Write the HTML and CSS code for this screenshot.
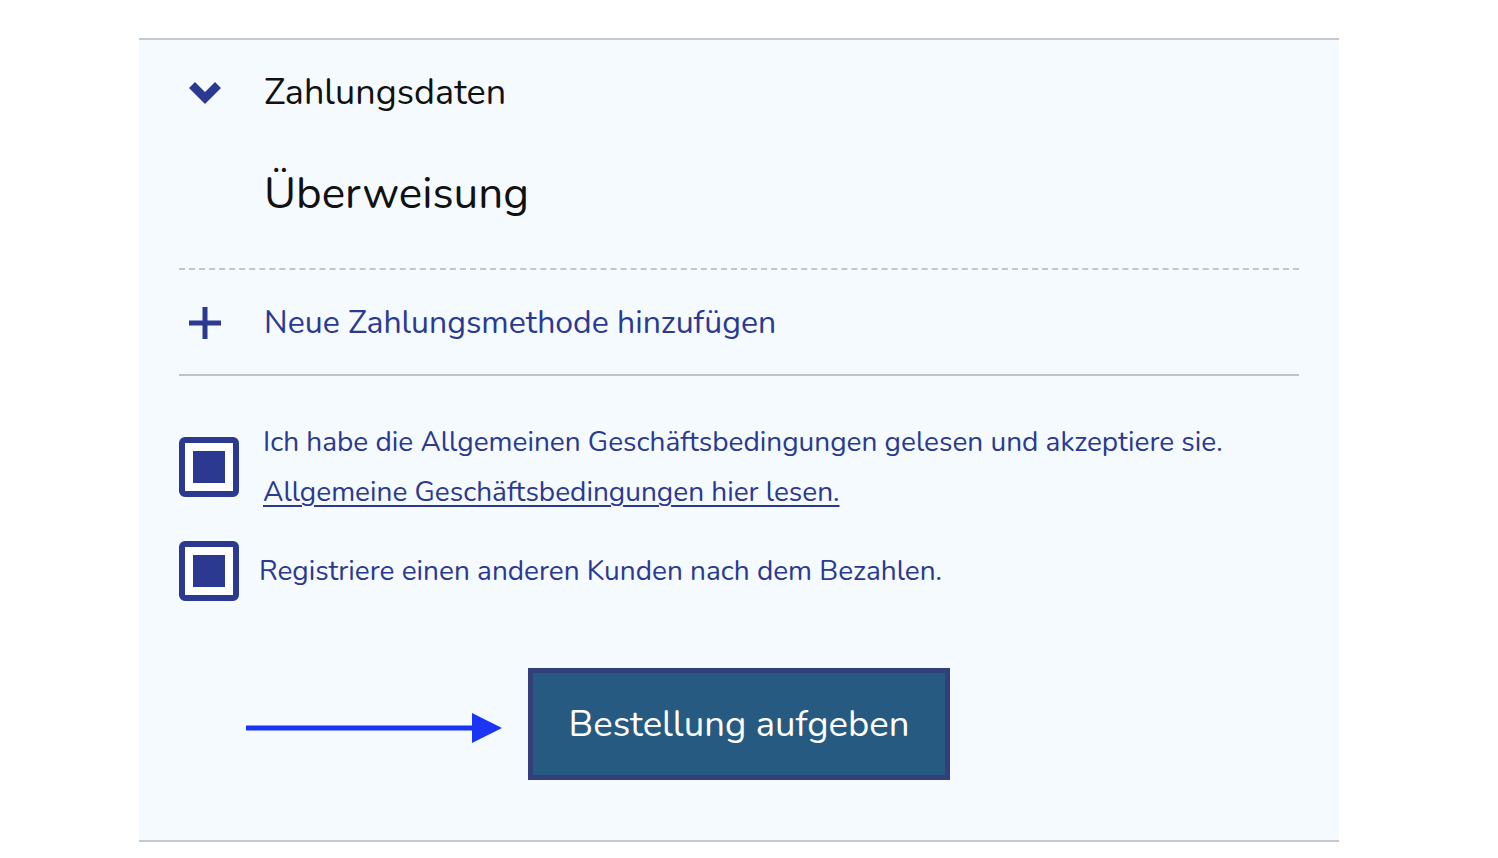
FILE: index.html
```html
<!DOCTYPE html>
<html lang="de">
<head>
<meta charset="utf-8">
<link rel="stylesheet" href="styles.css">
</head>
<body>
<section class="panel">
  <div class="header">
    <span class="chev"><svg width="32" height="22" viewBox="0 0 32 22"><path d="M0 6 L6 0 L16 10 L26 0 L32 6 L16 22 Z" fill="#2b3990"/></svg></span>
    <span class="title">Zahlungsdaten</span>
  </div>
  <div class="method">Überweisung</div>
  <div class="add">
    <span class="plus"><svg width="32" height="32" viewBox="0 0 32 32"><rect x="13.5" y="0" width="5" height="32" fill="#2b3990"/><rect x="0" y="13.5" width="32" height="5" fill="#2b3990"/></svg></span>
    <span class="add-text">Neue Zahlungsmethode hinzufügen</span>
  </div>
  <div class="checks">
    <div class="check-row">
      <span class="box"><span class="fill"></span></span>
      <div class="check-text">
        <div>Ich habe die Allgemeinen Geschäftsbedingungen gelesen und akzeptiere sie.</div>
        <a class="terms" href="#">Allgemeine Geschäftsbedingungen hier lesen.</a>
      </div>
    </div>
    <div class="check-row second">
      <span class="box"><span class="fill"></span></span>
      <div class="check-text single">Registriere einen anderen Kunden nach dem Bezahlen.</div>
    </div>
  </div>
  <div class="submit-row">
    <div class="submit-wrap">
      <span class="arrow"><svg width="256" height="32" viewBox="0 0 256 32"><rect x="0" y="13.5" width="228" height="5" fill="#1a35f5"/><path d="M226 1 L256 16 L226 31 Z" fill="#1a35f5"/></svg></span>
      <button class="submit">Bestellung aufgeben</button>
    </div>
  </div>
</section>
</body>
</html>
```
FILE: styles.css
```css
html, body {
  margin: 0;
  padding: 0;
  background: #ffffff;
}
body {
  font-family: "Nunito", "Lato", "Noto Sans", sans-serif;
}
.panel {
  width: 1200px;
  margin: 38px auto 0 139px;
  background: #f5faff;
  border-top: 2px solid #c8c9cc;
  border-bottom: 2px solid #c8c9cc;
  padding: 0 40px;
  box-sizing: border-box;
  height: 804px;
}
.header {
  height: 104px;
  display: flex;
  align-items: center;
}
.chev {
  width: 85px;
  display: flex;
  padding-left: 10px;
  box-sizing: border-box;
  margin-top: 2px;
}
.chev svg { display: block; }
.title {
  font-size: 36px;
  color: #111;
}
.method {
  height: 126px;
  box-sizing: border-box;
  padding-left: 85px;
  padding-top: 22px;
  font-size: 44px;
  color: #111;
  line-height: 56px;
  border-bottom: 2px dashed #c4c6c9;
}
.add {
  height: 106px;
  box-sizing: border-box;
  display: flex;
  align-items: center;
  border-bottom: 2px solid #bfc1c4;
}
.plus {
  width: 85px;
  display: flex;
  padding-left: 10px;
  box-sizing: border-box;
  margin-top: 2px;
}
.plus svg { display: block; }
.add-text {
  font-size: 32px;
  color: #2b3990;
}
.checks {
  padding-top: 61px;
}
.check-row {
  display: flex;
  align-items: flex-start;
  gap: 24px;
}
.check-row.second {
  margin-top: 24px;
  align-items: center;
  gap: 20px;
}
.box {
  width: 60px;
  height: 60px;
  box-sizing: border-box;
  border: 6px solid #2b3990;
  border-radius: 6px;
  background: #fff;
  padding: 8px;
  flex: none;
}
.fill {
  display: block;
  width: 32px;
  height: 32px;
  background: #2b3990;
}
.check-text {
  font-size: 28px;
  color: #2b3990;
  line-height: 50px;
  margin-top: -20px;
}
.check-text.single {
  margin-top: 0;
  line-height: 40px;
}
.terms {
  color: #2b3990;
  text-decoration: underline;
  text-decoration-thickness: 2px;
  text-underline-offset: 4px;
}
.submit-row {
  display: flex;
  justify-content: center;
  padding-top: 67px;
}
.submit-wrap {
  position: relative;
}
.arrow {
  position: absolute;
  right: calc(100% + 26px);
  top: 44px;
}
.arrow svg { display: block; }
.submit {
  width: 422px;
  height: 112px;
  box-sizing: border-box;
  background: #265a80;
  border: 5px solid #333f7a;
  color: #ffffff;
  font-family: inherit;
  font-size: 36.5px;
  padding: 0;
  margin: 0;
}
```
